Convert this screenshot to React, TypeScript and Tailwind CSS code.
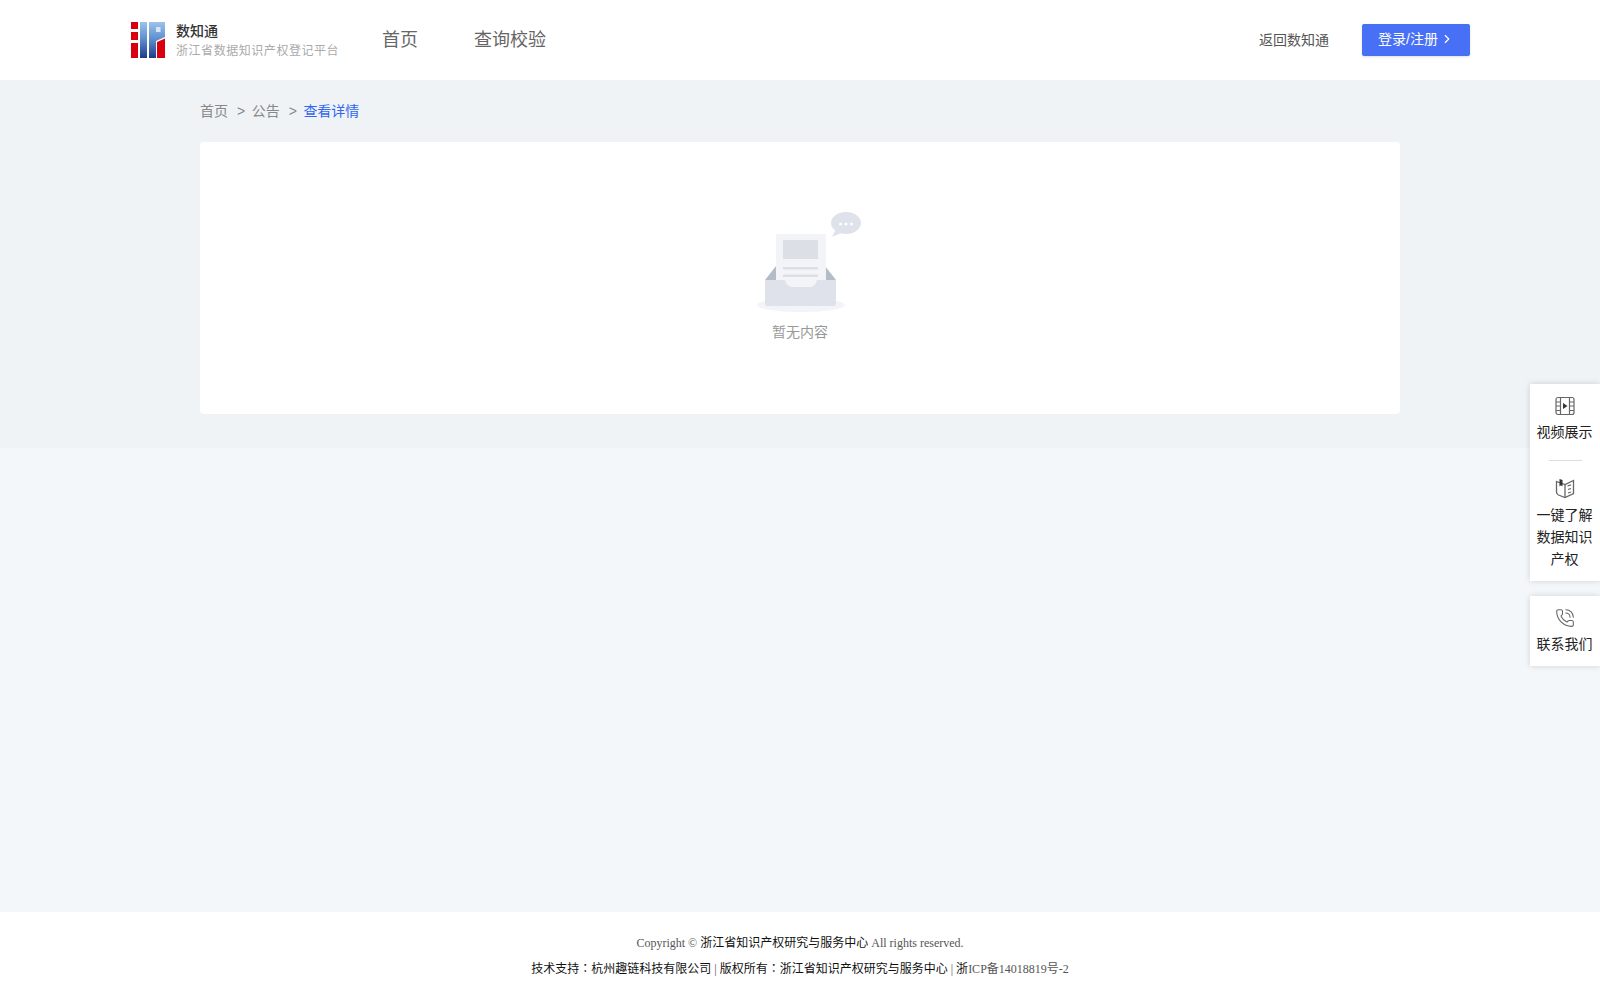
import { ChevronRight, PhoneCall } from "lucide-react";

const font = { fontFamily: '"Liberation Sans", "Noto Sans CJK SC", sans-serif' };

function Logo() {
  return (
    <svg width="34" height="36" viewBox="0 0 34 36" className="shrink-0">
      <defs>
        <linearGradient id="logoBlue" x1="0" y1="0" x2="0" y2="1">
          <stop offset="0" stopColor="#9cc3ec" />
          <stop offset="0.5" stopColor="#5b8bcb" />
          <stop offset="1" stopColor="#1f3a8a" />
        </linearGradient>
      </defs>
      <rect x="0" y="0" width="7" height="7" fill="#d8000f" />
      <rect x="0" y="10" width="7" height="8" fill="#d8000f" />
      <rect x="0" y="21" width="7" height="15" fill="#d8000f" />
      <rect x="9" y="0" width="7" height="36" fill="url(#logoBlue)" />
      <path d="M18 0h16v15l-9 4v17h-7z" fill="url(#logoBlue)" />
      <rect x="25" y="5" width="4.500" height="5" fill="#d6e5f6" />
      <path d="M26 20l8-3.500V36h-8z" fill="#d8000f" />
    </svg>
  );
}

function EmptyArt() {
  return (
    <svg width="124" height="102" viewBox="738 210 124 102" className="block">
      <ellipse cx="801" cy="305" rx="44" ry="7" fill="#f3f4f7" />
      <path d="M765 280l11-14v14z" fill="#b3bcc8" />
      <path d="M836 280l-11-14v14z" fill="#b3bcc8" />
      <path d="M765 280h71v24a2 2 0 0 1-2 2h-67a2 2 0 0 1-2-2z" fill="#dfe2ea" />
      <path d="M776 234h50v46h-9c-1 4-3 6-6 7h-20c-3-1-5-3-6-7h-9z" fill="#f3f4f7" />
      <rect x="783" y="240" width="35" height="19" fill="#dcdfe6" />
      <rect x="783" y="267" width="35" height="2.500" fill="#dcdfe6" />
      <rect x="783" y="274.500" width="35" height="2.500" fill="#dcdfe6" />
      <ellipse cx="846" cy="223" rx="15" ry="11" fill="#dfe2ea" />
      <path d="M836 229l-4 8 9-4z" fill="#dfe2ea" />
      <circle cx="840.500" cy="224" r="1.500" fill="#fff" />
      <circle cx="846" cy="224" r="1.500" fill="#fff" />
      <circle cx="851.500" cy="224" r="1.500" fill="#fff" />
    </svg>
  );
}

function FilmIcon() {
  return (
    <svg width="20" height="20" viewBox="0 0 20 20" fill="none" stroke="#666" strokeWidth="1.200">
      <rect x="1" y="1.500" width="18" height="17" rx="2" />
      <path d="M5.500 1.500v17M14.500 1.500v17M1 6h4.500M1 10h4.500M1 14.500h4.500M14.500 6H19M14.500 10H19M14.500 14.500H19" />
      <path d="M8 7l4.500 3L8 13z" fill="#333" stroke="none" />
    </svg>
  );
}

function BookIcon() {
  return (
    <svg width="20" height="21" viewBox="0 0 20 21" fill="none" stroke="#666" strokeWidth="1.300">
      <path d="M1.500 3.500l8.500 3 8.500-4v13l-8.500 4-6.500-2.500c-1.200-.5-2-1.500-2-3z" />
      <path d="M10 6.500v13" />
      <path d="M4.500 1v7.500l1.500-1.200 1.500 1.200V2z" fill="#333" stroke="none" />
      <path d="M12.500 8l3.500-1.200M13 11.500l3-1M13 15l3-1" />
    </svg>
  );
}

export default function App() {
  return (
    <div className="relative flex min-h-screen flex-col bg-[#f3f7fa]" style={font}>
      <header className="flex h-20 items-center bg-white pl-[131px] pr-[130px]">
        <Logo />
        <div className="ml-[11px] w-[206px] pt-[2px]">
          <div className="text-sm font-medium leading-[19px] text-[#333]">数知通</div>
          <div className="mt-[1px] text-xs leading-[18px] tracking-[0.55px] text-[#aaa]">浙江省数据知识产权登记平台</div>
        </div>
        <nav className="flex gap-[56px] text-lg text-[#666]">
          <a>首页</a>
          <a>查询校验</a>
        </nav>
        <div className="ml-auto text-sm text-[#555]">返回数知通</div>
        <button className="ml-[33px] flex h-8 w-[108px] items-center justify-center gap-[2px] rounded-[2px] bg-[#4870f6] pb-[2px] text-sm text-white shadow-sm">
          登录/注册
          <ChevronRight size={14} strokeWidth={2} />
        </button>
      </header>

      <section className="bg-[#eff3f6] px-[200px] pb-[34px]">
        <div className="flex h-[62px] items-center text-sm text-[#888]">
          <span>首页</span>
          <span className="ml-[9px] mr-[6.500px]">&gt;</span>
          <span>公告</span>
          <span className="ml-[9px] mr-[6.500px]">&gt;</span>
          <span className="text-[#2f66f2]">查看详情</span>
        </div>
        <div className="flex h-[272px] flex-col items-center rounded-[4px] bg-white pt-[68px]">
          <EmptyArt />
          <div className="mt-[10px] text-sm leading-5 text-[#999]">暂无内容</div>
        </div>
      </section>

      <div className="flex-1" />

      <footer className="flex h-[88px] flex-col items-center bg-white pt-[18px] text-xs text-[#555]" style={{ fontFamily: '"Liberation Serif", "Noto Sans CJK SC", serif' }}>
        <div className="leading-[26px]">
          Copyright © <span className="text-[#111]">浙江省知识产权研究与服务中心</span> All rights reserved.
        </div>
        <div className="-mt-px leading-[26px]">
          <span className="text-[#111]">技术支持<span className="font-['Noto_Sans_CJK_TC']">：</span>杭州趣链科技有限公司</span> | <span className="text-[#111]">版权所有<span className="font-['Noto_Sans_CJK_TC']">：</span>浙江省知识产权研究与服务中心</span> | <span className="text-[#111]">浙</span>ICP备14018819号-2
        </div>
      </footer>

      <aside className="absolute right-0 top-[384px] flex w-[70px] flex-col gap-[15px] text-center text-sm text-[#222]">
        <div className="flex h-[197px] flex-col items-center bg-white pt-[12px] shadow-[0_0_6px_rgba(0,0,0,0.15)]">
          <FilmIcon />
          <div className="mt-[5px] pr-[1px] leading-[22px]">视频展示</div>
          <div className="mt-[17px] h-px w-[33px] bg-[#ddd]" />
          <div className="mt-[17px]"><BookIcon /></div>
          <div className="mt-[5px] w-full pl-[6px] pr-[7px] leading-[22px]">一键了解数据知识产权</div>
        </div>
        <div className="flex h-[70px] flex-col items-center bg-white pt-[12px] shadow-[0_0_6px_rgba(0,0,0,0.15)]">
          <PhoneCall size={20} strokeWidth={1.300} color="#666" />
          <div className="mt-[5px] pr-[1px] leading-[22px]">联系我们</div>
        </div>
      </aside>
    </div>
  );
}
